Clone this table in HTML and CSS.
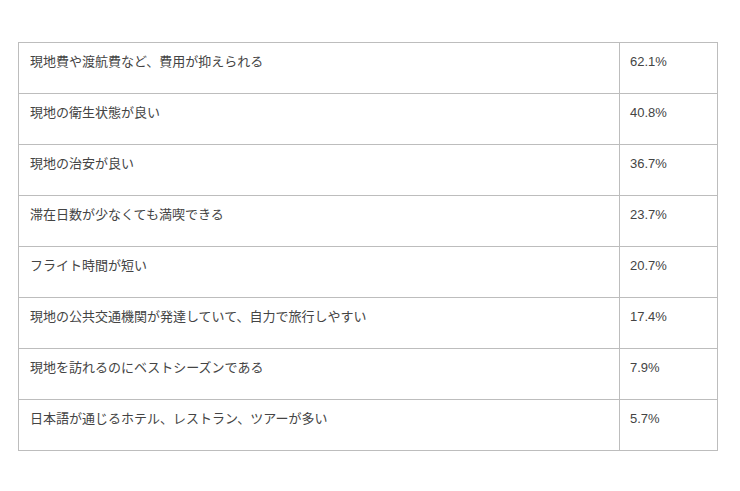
FILE: index.html
```html
<!DOCTYPE html>
<html lang="ja">
<head>
<meta charset="utf-8">
<link rel="stylesheet" href="styles.css">
</head>
<body>
<div class="wrap">
<table class="tbl">
<tbody>
<tr><td class="label">現地費や渡航費など、費用が抑えられる</td><td class="val">62.1%</td></tr>
<tr><td class="label">現地の衛生状態が良い</td><td class="val">40.8%</td></tr>
<tr><td class="label">現地の治安が良い</td><td class="val">36.7%</td></tr>
<tr><td class="label">滞在日数が少なくても満喫できる</td><td class="val">23.7%</td></tr>
<tr><td class="label">フライト時間が短い</td><td class="val">20.7%</td></tr>
<tr><td class="label">現地の公共交通機関が発達していて、自力で旅行しやすい</td><td class="val">17.4%</td></tr>
<tr><td class="label">現地を訪れるのにベストシーズンである</td><td class="val">7.9%</td></tr>
<tr><td class="label">日本語が通じるホテル、レストラン、ツアーが多い</td><td class="val">5.7%</td></tr>
</tbody>
</table>
</div>
</body>
</html>
```
FILE: styles.css
```css
html, body {
  margin: 0;
  padding: 0;
  background: #fff;
}
body {
  font-family: "Liberation Sans", "Noto Sans CJK JP", sans-serif;
  font-size: 13px;
  color: #444;
}
.wrap {
  padding: 42px 0 0 18px;
}
.tbl {
  border-collapse: collapse;
  width: 700px;
  table-layout: fixed;
}
.tbl td {
  border: 1px solid #bdbdbd;
  height: 51px;
  box-sizing: border-box;
  padding: 10px 11px 0 11px;
  vertical-align: top;
  line-height: 18px;
}
.tbl td.label {
  width: 601px;
}
.tbl td.val {
  padding-left: 10px;
}
```
